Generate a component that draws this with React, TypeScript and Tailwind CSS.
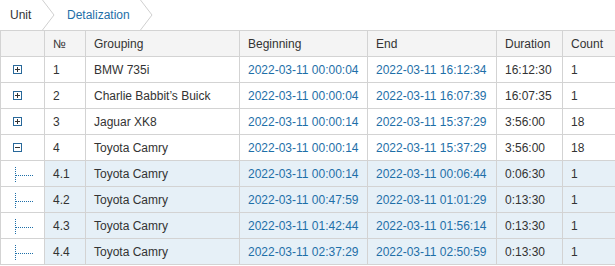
import React from "react";

type Row = {
  kind: "plus" | "minus" | "child";
  no: string;
  group: string;
  begin: string;
  end: string;
  dur: string;
  count: string;
};

const rows: Row[] = [
  { kind: "plus", no: "1", group: "BMW 735i", begin: "2022-03-11 00:00:04", end: "2022-03-11 16:12:34", dur: "16:12:30", count: "1" },
  { kind: "plus", no: "2", group: "Charlie Babbit’s Buick", begin: "2022-03-11 00:00:04", end: "2022-03-11 16:07:39", dur: "16:07:35", count: "1" },
  { kind: "plus", no: "3", group: "Jaguar XK8", begin: "2022-03-11 00:00:14", end: "2022-03-11 15:37:29", dur: "3:56:00", count: "18" },
  { kind: "minus", no: "4", group: "Toyota Camry", begin: "2022-03-11 00:00:14", end: "2022-03-11 15:37:29", dur: "3:56:00", count: "18" },
  { kind: "child", no: "4.1", group: "Toyota Camry", begin: "2022-03-11 00:00:14", end: "2022-03-11 00:06:44", dur: "0:06:30", count: "1" },
  { kind: "child", no: "4.2", group: "Toyota Camry", begin: "2022-03-11 00:47:59", end: "2022-03-11 01:01:29", dur: "0:13:30", count: "1" },
  { kind: "child", no: "4.3", group: "Toyota Camry", begin: "2022-03-11 01:42:44", end: "2022-03-11 01:56:14", dur: "0:13:30", count: "1" },
  { kind: "child", no: "4.4", group: "Toyota Camry", begin: "2022-03-11 02:37:29", end: "2022-03-11 02:50:59", dur: "0:13:30", count: "1" },
];

function BoxIcon({ minus }: { minus?: boolean }) {
  return (
    <svg width="9" height="9" viewBox="0 0 9 9" className="block">
      <rect x="0.5" y="0.5" width="8" height="8" fill="#fff" stroke="#28689a" strokeWidth="1" />
      <line x1="2" y1="4.5" x2="7" y2="4.5" stroke="#333" strokeWidth="1" />
      {!minus && <line x1="4.5" y1="2" x2="4.5" y2="7" stroke="#333" strokeWidth="1" />}
    </svg>
  );
}

function TreeIcon() {
  return (
    <svg width="22" height="16" viewBox="0 0 22 16" className="block">
      <line x1="1.5" y1="0" x2="1.5" y2="16" stroke="#1e6fa8" strokeWidth="1" strokeDasharray="1 1" />
      <line x1="2" y1="8.5" x2="19" y2="8.5" stroke="#1e6fa8" strokeWidth="1" strokeDasharray="1 1" />
    </svg>
  );
}

function Chevron() {
  return (
    <svg width="14" height="30" viewBox="0 0 14 30" className="block shrink-0">
      <polyline points="0.5,0 12,15 0.5,30" fill="none" stroke="#cfcfcf" strokeWidth="1" />
    </svg>
  );
}

export default function App() {
  const td = "border border-[#d3d3d3] h-[26px] px-[8px] py-0 whitespace-nowrap align-middle";
  return (
    <div
      className="w-[615px] h-[266px] bg-white text-[12px] text-[#333] overflow-hidden"
      style={{ fontFamily: '"Liberation Sans", Arial, sans-serif' }}
    >
      <div className="flex h-[30px] items-stretch">
        <div className="flex items-center pl-[10px] w-[42px]">Unit</div>
        <Chevron />
        <div className="flex items-center pl-[11px] w-[84px] text-[#1e6fa8]">Detalization</div>
        <Chevron />
      </div>
      <table className="table-fixed border-collapse w-[615px]">
        <colgroup>
          <col className="w-[44px]" />
          <col className="w-[41px]" />
          <col className="w-[154px]" />
          <col className="w-[128px]" />
          <col className="w-[129px]" />
          <col className="w-[66px]" />
          <col className="w-[53px]" />
        </colgroup>
        <thead>
          <tr className="bg-[#f4f4f4] text-left">
            <th className={`${td} font-normal`}></th>
            <th className={`${td} font-normal`}>№</th>
            <th className={`${td} font-normal`}>Grouping</th>
            <th className={`${td} font-normal`}>Beginning</th>
            <th className={`${td} font-normal`}>End</th>
            <th className={`${td} font-normal`}>Duration</th>
            <th className={`${td} font-normal`}>Count</th>
          </tr>
        </thead>
        <tbody>
          {rows.map((r, i) => {
            const child = r.kind === "child";
            const bg = child ? "bg-[#e6f0f7]" : "bg-white";
            return (
              <tr key={i}>
                <td className={`${td} bg-white`}>
                  {child ? (
                    <div className="pl-[5px] pt-[2px]">
                      <TreeIcon />
                    </div>
                  ) : (
                    <div className="pl-[4px]">
                      <BoxIcon minus={r.kind === "minus"} />
                    </div>
                  )}
                </td>
                <td className={`${td} ${bg}`}>{r.no}</td>
                <td className={`${td} ${bg}`}>{r.group}</td>
                <td className={`${td} ${bg} text-[#1e6fa8]`}>{r.begin}</td>
                <td className={`${td} ${bg} text-[#1e6fa8]`}>{r.end}</td>
                <td className={`${td} ${bg}`}>{r.dur}</td>
                <td className={`${td} ${bg}`}>{r.count}</td>
              </tr>
            );
          })}
        </tbody>
      </table>
    </div>
  );
}
